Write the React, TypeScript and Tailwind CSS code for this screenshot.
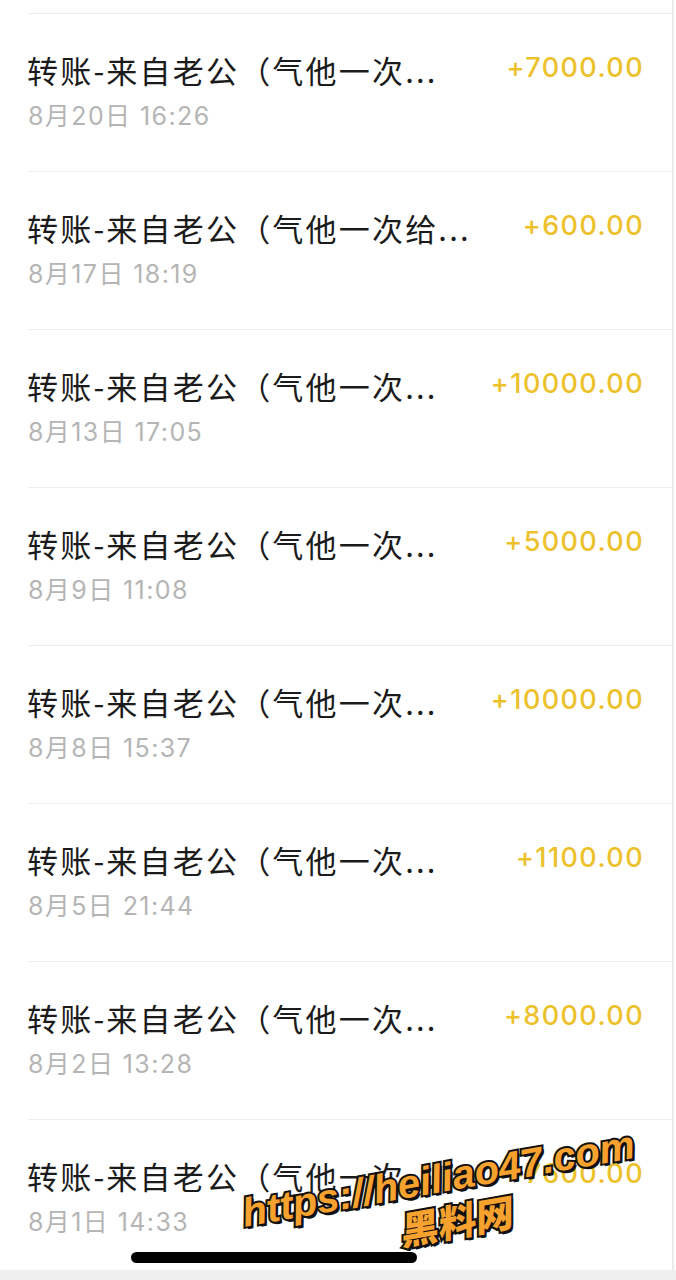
import React from "react";

const rows = [
  { t: "转账-来自老公（气他一次...", d: "8月20日 16:26", a: "+7000.00" },
  { t: "转账-来自老公（气他一次给...", d: "8月17日 18:19", a: "+600.00" },
  { t: "转账-来自老公（气他一次...", d: "8月13日 17:05", a: "+10000.00" },
  { t: "转账-来自老公（气他一次...", d: "8月9日 11:08", a: "+5000.00" },
  { t: "转账-来自老公（气他一次...", d: "8月8日 15:37", a: "+10000.00" },
  { t: "转账-来自老公（气他一次...", d: "8月5日 21:44", a: "+1100.00" },
  { t: "转账-来自老公（气他一次...", d: "8月2日 13:28", a: "+8000.00" },
  { t: "转账-来自老公（气他一次...", d: "8月1日 14:33", a: "+7600.00" },
];

export default function App() {
  return (
    <div className="relative w-[676px] h-[1280px] bg-white overflow-hidden">
      <div className="flex h-[1270px]">
        <div className="w-[674px] h-full border-r-2 border-[#ebebeb] overflow-hidden">
          <div className="h-[13px]" />
          {rows.map((r, i) => (
            <div key={i} className="ml-[28px] h-[158px] border-t border-[#ececec]">
              <div className="flex items-center justify-between pr-[28px] pt-[36px] h-[76px]">
                <div
                  className="text-[31px] leading-[40px] tracking-[2.2px] text-[#1b1b1b] whitespace-nowrap -ml-[1px]"
                  style={{ fontFamily: '"Noto Sans CJK SC", sans-serif' }}
                >
                  {r.t}
                </div>
                <div
                  className="text-[27px] leading-[40px] font-medium text-[#ecc12c] tracking-[1.4px] -mt-[4px]"
                  style={{ fontFamily: 'Inter, "Noto Sans", sans-serif' }}
                >
                  {r.a}
                </div>
              </div>
              <div
                className="mt-[11px] text-[25px] leading-[30px] tracking-[1.4px] text-[#b5b5b5] whitespace-nowrap"
                style={{ fontFamily: 'Inter, "Noto Sans CJK SC", sans-serif' }}
              >
                {r.d}
              </div>
            </div>
          ))}
        </div>
      </div>
      <div className="h-[10px] bg-[#efefef]" />
      <div className="absolute left-[131px] top-[1252px] w-[286px] h-[11px] rounded-full bg-black" />
      <div className="absolute left-[222px] top-[1156px] w-[440px] h-[88px] -rotate-[10deg] flex flex-col items-center">
        <div
          className="text-[40px] leading-[44px] font-black italic text-[#f7a22e] whitespace-nowrap [-webkit-text-stroke:4px_#111] [paint-order:stroke_fill] [text-shadow:2px_3px_0_#111]"
          style={{ fontFamily: '"Liberation Sans", Arial, sans-serif' }}
        >
          https://heiliao47.com
        </div>
        <div
          className="ml-[24px] -skew-x-[10deg] text-[38px] leading-[44px] font-black text-[#f7a22e] whitespace-nowrap [-webkit-text-stroke:4px_#111] [paint-order:stroke_fill] [text-shadow:2px_3px_0_#111]"
          style={{ fontFamily: '"Noto Sans CJK SC", sans-serif' }}
        >
          黑料网
        </div>
      </div>
    </div>
  );
}
